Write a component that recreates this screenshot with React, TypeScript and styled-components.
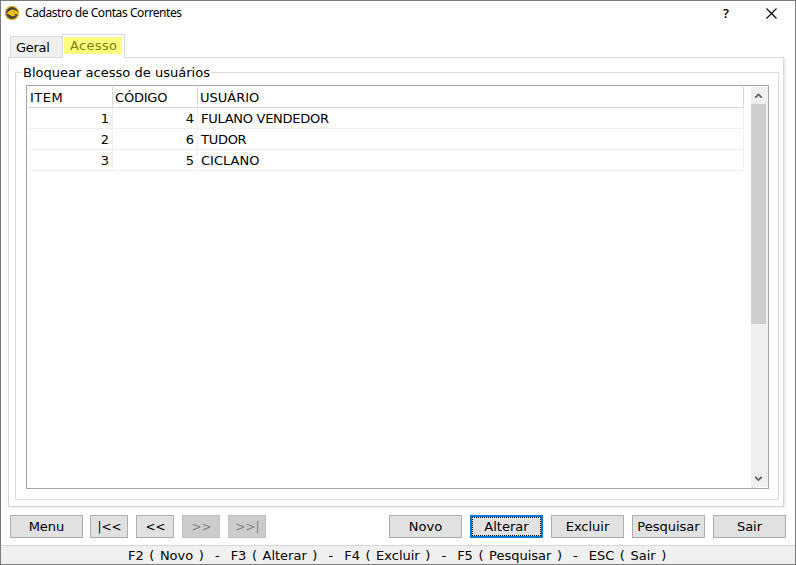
import React from "react";
import styled, { createGlobalStyle } from "styled-components";

const Global = createGlobalStyle`
  * { box-sizing: border-box; }
  html, body { margin: 0; padding: 0; background: #fff; }
  button { font: inherit; letter-spacing: inherit; color: inherit; }
`;

const Window = styled.div`
  width: 796px;
  height: 565px;
  border: 1px solid #7a7a7a;
  background: #fff;
  display: flex;
  flex-direction: column;
  overflow: hidden;
  font: 13px/16px Verdana, "DejaVu Sans", sans-serif;
  color: #000;
  white-space: pre;
`;

const TitleBar = styled.header`
  height: 33px;
  flex: none;
  display: flex;
  align-items: flex-start;
  padding: 4px 0 0 3px;
`;

const Title = styled.h1`
  margin: -1px 0 0 5px;
  font: 400 12px/17px "Segoe UI", "Noto Sans", sans-serif;
  letter-spacing: -0.43px;
  flex: 1;
`;

const Help = styled.span`
  width: 16px;
  margin: -1px 32px 0 0;
  text-align: center;
  font: 600 13px/18px "Segoe UI", "Open Sans", sans-serif;
`;

const CloseIcon = styled.svg`
  width: 11px;
  height: 11px;
  margin: 3px 18px 0 0;
`;

const Tabs = styled.nav`
  height: 23px;
  flex: none;
  display: flex;
  align-items: flex-end;
  padding-left: 9px;
`;

const Tab = styled.div<{ $active?: boolean }>`
  width: ${(p) => (p.$active ? 63 : 52)}px;
  height: ${(p) => (p.$active ? 24 : 21)}px;
  margin-bottom: ${(p) => (p.$active ? -1 : 0)}px;
  padding: ${(p) => (p.$active ? "2px 1px 0 1px" : "3px 0 0 5px")};
  border: 1px solid #d9d9d9;
  border-bottom: 0;
  border-right-width: ${(p) => (p.$active ? 1 : 0)}px;
  background: ${(p) => (p.$active ? "#fff" : "#f0f0f0")};
  letter-spacing: ${(p) => (p.$active ? 0.35 : -0.3)}px;
  position: relative;
`;

const Highlight = styled.span`
  display: block;
  width: 58px;
  height: 17px;
  padding-left: 6px;
  line-height: 17px;
  background: #ffff80;
  color: #808000;
`;

const Page = styled.main`
  width: 776px;
  height: 450px;
  flex: none;
  margin-left: 7px;
  border: 1px solid #d9d9d9;
  box-shadow: 2px 1px 0 #f0f0f0;
  padding: 7px 4px 6px 6px;
`;

const Group = styled.fieldset`
  width: 764px;
  height: 435px;
  margin: 0;
  padding: 0;
  border: 1px solid #dcdcdc;
  min-width: 0;
`;

const Legend = styled.legend`
  height: 15px;
  margin-left: 6px;
  padding: 0 1px;
  letter-spacing: 0.02px;
`;

const Grid = styled.section`
  width: 743px;
  height: 404px;
  margin: 5px 0 0 10px;
  border: 1px solid #a5a5ab;
  padding: 1px 0 1px 1px;
  display: flex;
  justify-content: space-between;
`;

const Table = styled.div`
  width: 716px;
`;

const Row = styled.div<{ $head?: boolean }>`
  display: grid;
  grid-template-columns: 85px 85px 546px;
  height: 21px;
  line-height: 22px;
  border-bottom: 1px solid ${(p) => (p.$head ? "#d9d9d9" : "#f0f0f0")};
`;

const Cell = styled.span<{ $right?: boolean; $head?: boolean; $track?: number }>`
  height: 20px;
  border-right: 1px solid ${(p) => (p.$head ? "#d9d9d9" : "#f0f0f0")};
  text-align: ${(p) => (p.$right ? "right" : "left")};
  padding: 0 3px 0 ${(p) => (p.$head ? 2 : 3)}px;
  letter-spacing: ${(p) => p.$track ?? 0}px;
`;

const Scrollbar = styled.div`
  width: 17px;
  height: 400px;
  background: #f0f0f0;
  display: flex;
  flex-direction: column;
  justify-content: space-between;
`;

const Thumb = styled.div`
  width: 15px;
  height: 220px;
  background: #cdcdcd;
  margin-bottom: auto;
`;

const Arrow = styled.svg`
  width: 15px;
  height: 17px;
  flex: none;
`;

const Actions = styled.div`
  display: flex;
  gap: 8px;
  padding: 8px 9px 0;
  height: 38px;
  flex: none;
`;

const Button = styled.button<{ $small?: boolean; $focus?: boolean; $push?: boolean; $gap?: number }>`
  width: ${(p) => (p.$small ? 38 : 73)}px;
  height: 23px;
  flex: none;
  padding: ${(p) => (p.$small ? "1px 0 0 1px" : "0")};
  margin-left: ${(p) => (p.$push ? "auto" : `${p.$gap ?? 0}px`)};
  font-size: ${(p) => (p.$small ? 12 : 13)}px;
  line-height: ${(p) => (p.$focus ? 17 : 20)}px;
  border: ${(p) => (p.$focus ? "2px solid #0078d7" : "1px solid #adadad")};
  background: #e1e1e1;
  white-space: pre;
  outline: ${(p) => (p.$focus ? "1px dotted #000" : "none")};
  outline-offset: -3px;
  &:disabled {
    background: #ccc;
    border-color: #bfbfbf;
    color: #838383;
  }
`;

const Status = styled.footer`
  flex: 1;
  border-top: 1px solid #d7d7d7;
  background: #f0f0f0;
  line-height: 19px;
  padding-left: 127px;
  word-spacing: 1.4px;
`;

const users = [
  { item: 1, code: 4, name: "FULANO VENDEDOR" },
  { item: 2, code: 6, name: "TUDOR" },
  { item: 3, code: 5, name: "CICLANO" },
];

function Logo() {
  return (
    <svg width="16" height="16" viewBox="0 0 16 16">
      <circle cx="8" cy="8" r="6.6" fill="#424548" stroke="#e7b528" strokeWidth="1.3" />
      <path d="M2.5 8.6 5 6 8 4.6 11.5 5.2 13.8 7.2 14.2 9.4 11 9 10 9.6 12 11 8 11.2 5 9.6Z" fill="#f5c012" />
      <path d="M9 7h2" stroke="#a88520" strokeWidth="0.7" />
    </svg>
  );
}

export default function App() {
  return (
    <>
      <Global />
      <Window>
        <TitleBar>
          <Logo />
          <Title>Cadastro de Contas Correntes</Title>
          <Help>?</Help>
          <CloseIcon viewBox="0 0 11 11">
            <path d="M.5.5 10.5 10.5M10.5.5.5 10.5" stroke="#000" strokeWidth="1.1" />
          </CloseIcon>
        </TitleBar>
        <Tabs>
          <Tab>Geral</Tab>
          <Tab $active><Highlight>Acesso</Highlight></Tab>
        </Tabs>
        <Page>
          <Group>
            <Legend>Bloquear acesso de usuários</Legend>
            <Grid>
              <Table>
                <Row $head>
                  <Cell $head $track={0.5}>ITEM</Cell>
                  <Cell $head $track={-0.2}>CÓDIGO</Cell>
                  <Cell $head>USUÁRIO</Cell>
                </Row>
                {users.map((u) => (
                  <Row key={u.item}>
                    <Cell $right>{u.item}</Cell>
                    <Cell $right>{u.code}</Cell>
                    <Cell $track={u.name === "CICLANO" ? 0 : -0.28}>{u.name}</Cell>
                  </Row>
                ))}
              </Table>
              <Scrollbar>
                <Arrow viewBox="0 0 15 17"><path d="M4.2 10.7 7.5 7.4 10.8 10.7" fill="none" stroke="#606060" strokeWidth="1.8" /></Arrow>
                <Thumb />
                <Arrow viewBox="0 0 15 17"><path d="M4.2 6.8 7.5 10.1 10.8 6.8" fill="none" stroke="#606060" strokeWidth="1.8" /></Arrow>
              </Scrollbar>
            </Grid>
          </Group>
        </Page>
        <Actions>
          <Button>Menu</Button>
          <Button $small $gap={-1}>|&lt;&lt;</Button>
          <Button $small>&lt;&lt;</Button>
          <Button $small disabled>&gt;&gt;</Button>
          <Button $small disabled>&gt;&gt;|</Button>
          <Button $push>Novo</Button>
          <Button $focus>Alterar</Button>
          <Button>Excluir</Button>
          <Button>Pesquisar</Button>
          <Button>Sair</Button>
        </Actions>
        <Status>F2 ( Novo )  -  F3 ( Alterar )  -  F4 ( Excluir )  -  F5 ( Pesquisar )  -  ESC ( Sair )</Status>
      </Window>
    </>
  );
}
